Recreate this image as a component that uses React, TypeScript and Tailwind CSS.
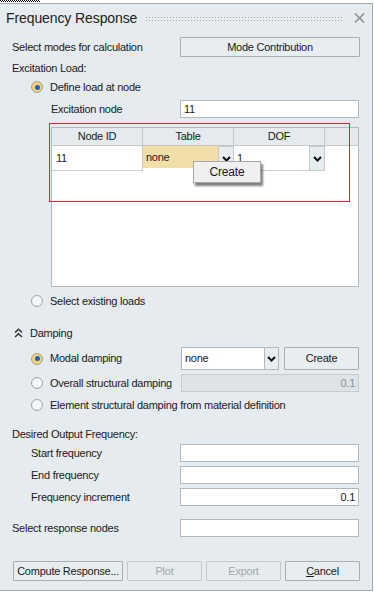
import React from "react";

function Radio({ checked }: { checked?: boolean }) {
  if (checked) {
    return (
      <span className="w-[12px] h-[12px] rounded-full border border-[#a3a3a3] bg-[#f5d36c] flex items-center justify-center shrink-0">
        <span className="w-[5px] h-[5px] rounded-full bg-[#1f5fc6]" />
      </span>
    );
  }
  return (
    <span className="w-[12px] h-[12px] rounded-full border border-[#9ea3a7] bg-[#f4f6f7] shrink-0" />
  );
}

function Input({ value, right }: { value?: string; right?: boolean }) {
  return (
    <div
      className={`w-[179px] h-[18px] bg-white border border-[#b3b8bc] flex items-center px-[3px] ${right ? "justify-end" : ""}`}
    >
      {value}
    </div>
  );
}

function Arrow() {
  return (
    <svg width="9" height="6" viewBox="0 0 9 6">
      <path d="M1 1 L4.5 4.5 L8 1" fill="none" stroke="#111" strokeWidth="2" />
    </svg>
  );
}

function Btn({ children, disabled, w }: { children: React.ReactNode; disabled?: boolean; w: string }) {
  return (
    <div
      className={`${w} h-[20px] border rounded-[1px] flex items-center justify-center ${
        disabled ? "border-[#c4c9cc] text-[#a3a8ac] bg-[#e6ebee]" : "border-[#a9aeb2] bg-[#e8edf0] text-[#1a1a1a]"
      }`}
    >
      {children}
    </div>
  );
}

export default function App() {
  return (
    <div className="w-[374px] h-[593px] bg-white relative overflow-hidden font-['Liberation_Sans',Arial,sans-serif] text-[11px] tracking-[-0.25px] text-[#1a1a1a] leading-none">
      <div className="h-[3px] flex">
        <svg width="40" height="2">
          <defs>
            <pattern id="chk" width="2" height="2" patternUnits="userSpaceOnUse">
              <rect x="0" y="0" width="1" height="1" fill="#000" />
              <rect x="1" y="1" width="1" height="1" fill="#000" />
            </pattern>
          </defs>
          <rect width="40" height="2" fill="url(#chk)" />
        </svg>
      </div>
      <div className="w-[373px] h-[588px] bg-[#e5ebef] border-t border-r border-b border-[#a5abaf] flex flex-col">
        {/* title bar */}
        <div className="h-[28px] flex items-center shrink-0">
          <span className="ml-[6px] text-[14px] tracking-[-0.1px] text-[#222]">Frequency Response</span>
          <svg className="ml-[9px]" width="200" height="8">
            <defs>
              <pattern id="grip" width="3" height="3" patternUnits="userSpaceOnUse">
                <rect x="0" y="0" width="1" height="1" fill="#a1a8ae" />
              </pattern>
            </defs>
            <rect x="0" y="1" width="198" height="6" fill="url(#grip)" />
          </svg>
          <svg className="ml-[8px]" width="11" height="10" viewBox="0 0 11 10">
            <path d="M1 0.5 L10 9.5 M10 0.5 L1 9.5" stroke="#8b9196" strokeWidth="1.6" />
          </svg>
        </div>

        <div className="px-[12px] flex flex-col">
          {/* Select modes */}
          <div className="mt-[5px] h-[20px] flex items-center">
            <span className="w-[168px]">Select modes for calculation</span>
            <Btn w="w-[180px]">Mode Contribution</Btn>
          </div>
          {/* Excitation load */}
          <div className="h-[22px] flex items-center">Excitation Load:</div>
          <div className="h-[16px] flex items-center pl-[19px]">
            <Radio checked />
            <span className="ml-[7px]">Define load at node</span>
          </div>
          <div className="mt-[5px] h-[18px] flex items-center">
            <span className="w-[168px] pl-[39px]">Excitation node</span>
            <Input value="11" />
          </div>

          {/* table */}
          <div className="mt-[9px] ml-[39px] w-[308px] h-[160px] border border-[#b3b8bc] bg-white relative">
            <div className="h-[18px] flex bg-[#e4eaee] border-b border-[#c3c8cc]">
              <div className="w-[91px] border-r border-[#c3c8cc] flex items-center justify-center">Node ID</div>
              <div className="w-[91px] border-r border-[#c3c8cc] flex items-center justify-center">Table</div>
              <div className="w-[91px] border-r border-[#c3c8cc] flex items-center justify-center">DOF</div>
            </div>
            <div className="h-[25px] flex">
              <div className="w-[91px] border-r border-b border-[#c8cdd1] flex items-center pl-[4px] text-[#2a1a3a]">11</div>
              <div className="w-[75px] bg-[#f2dea8] flex items-center pl-[3px] mb-[3px]">none</div>
              <div className="w-[16px] border border-[#c3c8cc] bg-[#e8edf0] flex items-center justify-center">
                <Arrow />
              </div>
              <div className="w-[75px] border-b border-[#c8cdd1] flex items-center pl-[3px]">1</div>
              <div className="w-[16px] border border-[#c3c8cc] bg-[#e8edf0] flex items-center justify-center">
                <Arrow />
              </div>
            </div>
            <svg className="absolute left-[-3px] top-[-5px]" width="301" height="79">
              <rect x="0.5" y="0.5" width="300" height="78" fill="none" stroke="#e3222b" strokeWidth="1" />
            </svg>
            <div className="absolute left-[141px] top-[33px] w-[68px] h-[22px] bg-[#f0f0f0] border border-[#a8a8a8] shadow-[2px_3px_2px_rgba(0,0,0,0.5)] flex items-center justify-center text-[12px] tracking-[-0.2px]">
              Create
            </div>
          </div>

          <div className="mt-[5px] h-[18px] flex items-center pl-[19px]">
            <Radio />
            <span className="ml-[7px]">Select existing loads</span>
          </div>

          {/* Damping */}
          <div className="mt-[13px] h-[20px] flex items-center pl-[2px]">
            <svg width="9" height="10" viewBox="0 0 9 10">
              <path d="M1 4.5 L4.5 1.2 L8 4.5 M1 9 L4.5 5.7 L8 9" fill="none" stroke="#333" strokeWidth="1.5" />
            </svg>
            <span className="ml-[7px]">Damping</span>
          </div>
          <div className="mt-[4px] h-[23px] flex items-center">
            <span className="w-[169px] pl-[19px] flex items-center">
              <Radio checked />
              <span className="ml-[7px]">Modal damping</span>
            </span>
            <div className="w-[98px] h-[23px] flex border border-[#b3b8bc] bg-white">
              <div className="flex-1 flex items-center pl-[3px]">none</div>
              <div className="w-[14px] border-l border-[#b3b8bc] bg-[#e8edf0] flex items-center justify-center">
                <Arrow />
              </div>
            </div>
            <div className="ml-[5px] w-[75px] h-[23px] border border-[#a9aeb2] bg-[#e8edf0] rounded-[1px] flex items-center justify-center">
              Create
            </div>
          </div>
          <div className="mt-[4px] h-[18px] flex items-center">
            <span className="w-[169px] pl-[19px] flex items-center">
              <Radio />
              <span className="ml-[7px]">Overall structural damping</span>
            </span>
            <div className="w-[178px] h-[18px] bg-[#dde3e7] border border-[#c6cbcf] flex items-center justify-end pr-[3px] text-[#8d9297]">
              0.1
            </div>
          </div>
          <div className="mt-[4px] h-[18px] flex items-center pl-[19px]">
            <Radio />
            <span className="ml-[7px]">Element structural damping from material definition</span>
          </div>

          {/* Output frequency */}
          <div className="mt-[11px] h-[18px] flex items-center">Desired Output Frequency:</div>
          <div className="mt-[1px] h-[18px] flex items-center">
            <span className="w-[168px] pl-[19px]">Start frequency</span>
            <Input />
          </div>
          <div className="mt-[4px] h-[18px] flex items-center">
            <span className="w-[168px] pl-[19px]">End frequency</span>
            <Input />
          </div>
          <div className="mt-[4px] h-[18px] flex items-center">
            <span className="w-[168px] pl-[19px]">Frequency increment</span>
            <Input value="0.1" right />
          </div>
          <div className="mt-[13px] h-[18px] flex items-center">
            <span className="w-[168px]">Select response nodes</span>
            <Input />
          </div>

          {/* buttons */}
          <div className="mt-[24px] ml-[1px] flex gap-[4px]">
            <Btn w="w-[110px]">Compute Response...</Btn>
            <Btn w="w-[75px]" disabled>
              Plot
            </Btn>
            <Btn w="w-[75px]" disabled>
              Export
            </Btn>
            <Btn w="w-[75px]">
              <span>
                <span className="underline">C</span>ancel
              </span>
            </Btn>
          </div>
        </div>
      </div>
    </div>
  );
}
